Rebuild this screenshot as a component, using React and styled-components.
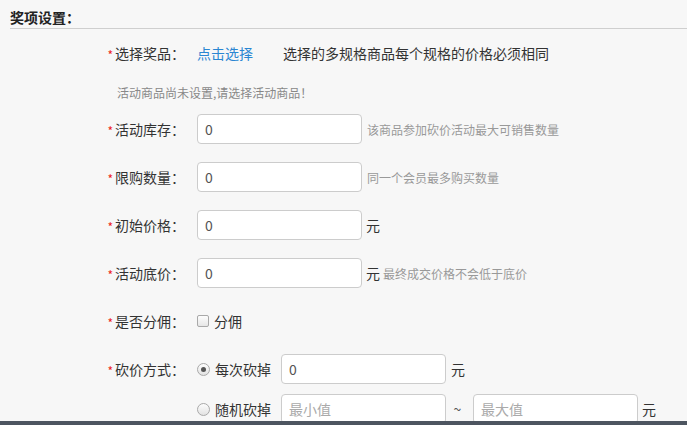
import React from 'react';
import styled, { createGlobalStyle } from 'styled-components';

const GlobalStyle = createGlobalStyle`
  html, body {
    margin: 0;
    padding: 0;
    background: #f7f7f7;
    font-family: "Noto Sans CJK SC", "Noto Sans", "Liberation Sans", sans-serif;
    font-size: 14px;
    color: #333;
  }
`;

const Page = styled.div`
  padding-left: 10px;
`;

const SectionTitle = styled.div`
  height: 22px;
  padding-top: 6px;
  line-height: 22px;
  font-weight: bold;
  font-size: 14px;
  color: #222;
  border-bottom: 1px solid #cfcfcf;
`;

const Form = styled.div`
  margin-left: -10px;
`;

const Row = styled.div`
  display: flex;
  align-items: center;
  height: ${(p) => p.$h || 30}px;
  margin-top: ${(p) => p.$mt || 0}px;
`;

const Label = styled.div`
  width: 185px;
  flex-shrink: 0;
  text-align: right;
  line-height: 20px;
  color: #333;
`;

const Star = styled.span`
  color: #e22;
  font-size: 12px;
  line-height: 12px;
  vertical-align: middle;
  margin-right: 2px;
`;

const Field = styled.div`
  display: flex;
  align-items: center;
  white-space: nowrap;
  margin-left: ${(p) => (p.$empty ? 197 : 12)}px;
`;

const Input = styled.input`
  box-sizing: border-box;
  flex-shrink: 0;
  width: 165px;
  height: 30px;
  padding: 0 7px;
  border: 1px solid #ccc;
  border-radius: 4px;
  background: #fff;
  font-family: inherit;
  font-size: 14px;
  color: #555;
  outline: none;
  margin-left: ${(p) => p.$ml || 0}px;
  &::placeholder {
    color: #aaa;
  }
`;

const Link = styled.a`
  color: #2a86d2;
  text-decoration: none;
  cursor: pointer;
`;

const Text = styled.span`
  margin-left: ${(p) => p.$ml || 0}px;
  color: #333;
`;

const Hint = styled.span`
  margin-left: ${(p) => p.$ml || 5}px;
  font-size: 12px;
  color: #999;
`;

const Note = styled.div`
  margin-left: 117px;
  font-size: 12px;
  color: #888;
  line-height: 20px;
`;

const Checkbox = styled.span`
  box-sizing: border-box;
  display: inline-block;
  width: 12px;
  height: 12px;
  border: 1px solid #a9a9a9;
  border-radius: 2px;
  background: linear-gradient(#fdfdfd, #e6e6e6);
`;

const Radio = styled.span`
  box-sizing: border-box;
  position: relative;
  flex-shrink: 0;
  display: inline-block;
  width: 13px;
  height: 13px;
  border: 1px solid #a9a9a9;
  border-radius: 50%;
  background: linear-gradient(#fdfdfd, #e2e2e2);
  &::after {
    content: '';
    display: ${(p) => (p.$checked ? 'block' : 'none')};
    position: absolute;
    left: 3px;
    top: 3px;
    width: 5px;
    height: 5px;
    border-radius: 50%;
    background: #555;
  }
`;

const Option = styled.label`
  display: flex;
  align-items: center;
  gap: 5px;
  white-space: nowrap;
  flex-shrink: 0;
`;

const Tilde = styled.span`
  width: 27px;
  flex-shrink: 0;
  padding-right: 4px;
  box-sizing: border-box;
  text-align: center;
  color: #555;
`;

const Footer = styled.div`
  position: fixed;
  left: 0;
  right: 0;
  bottom: 0;
  height: 4px;
  background: #4d5560;
`;

const fields = [
  { label: '活动库存', hint: '该商品参加砍价活动最大可销售数量' },
  { label: '限购数量', hint: '同一个会员最多购买数量' },
  { label: '初始价格', unit: '元' },
  { label: '活动底价', unit: '元', hint: '最终成交价格不会低于底价' },
];

export default function App() {
  return (
    <>
      <GlobalStyle />
      <Page>
        <SectionTitle>奖项设置：</SectionTitle>
        <Form>
          <Row $h={28} $mt={10}>
            <Label><Star>*</Star>选择奖品：</Label>
            <Field>
              <Link>点击选择</Link>
              <Text $ml={30}>选择的多规格商品每个规格的价格必须相同</Text>
            </Field>
          </Row>
          <Row $h={20} $mt={16}>
            <Note>活动商品尚未设置,请选择活动商品！</Note>
          </Row>
          {fields.map((f, i) => (
            <Row key={f.label} $mt={i === 0 ? 11 : 18}>
              <Label><Star>*</Star>{f.label}：</Label>
              <Field>
                <Input defaultValue="0" />
                {f.unit && <Text $ml={4}>{f.unit}</Text>}
                {f.hint && <Hint $ml={f.unit ? 3 : 5}>{f.hint}</Hint>}
              </Field>
            </Row>
          ))}
          <Row $mt={18}>
            <Label><Star>*</Star>是否分佣：</Label>
            <Field>
              <Option>
                <Checkbox />
                分佣
              </Option>
            </Field>
          </Row>
          <Row $mt={18}>
            <Label><Star>*</Star>砍价方式：</Label>
            <Field>
              <Option>
                <Radio $checked />
                每次砍掉
              </Option>
              <Input $ml={10} defaultValue="0" />
              <Text $ml={5}>元</Text>
            </Field>
          </Row>
          <Row $mt={10}>
            <Field $empty>
              <Option>
                <Radio />
                随机砍掉
              </Option>
              <Input $ml={10} placeholder="最小值" />
              <Tilde>~</Tilde>
              <Input placeholder="最大值" />
              <Text $ml={4}>元</Text>
            </Field>
          </Row>
        </Form>
      </Page>
      <Footer />
    </>
  );
}
